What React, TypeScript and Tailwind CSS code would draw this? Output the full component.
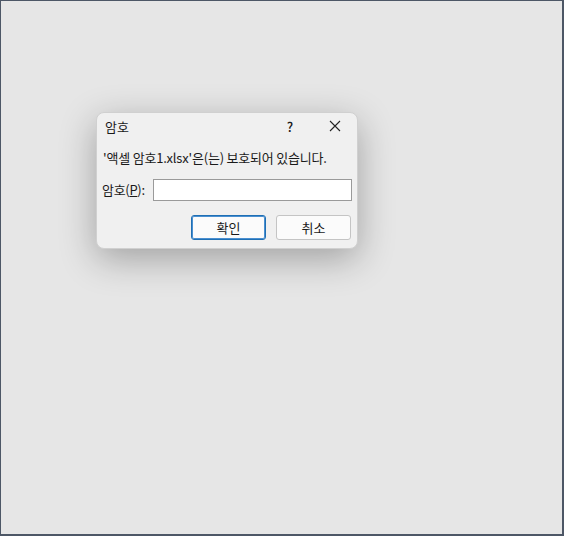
import React from 'react';

export default function App() {
  return (
    <div
      className="w-[564px] h-[536px] bg-[#e6e6e6] border-t border-l border-r-2 border-b-2 border-[#4d5766] pl-[95px] pt-[111px]"
      style={{ fontFamily: '"Noto Sans CJK KR", "Noto Sans", sans-serif' }}
    >
      <div className="w-[262px] h-[137px] bg-[#f0f0f0] rounded-[8px] border border-[#d0d0d0] shadow-[0_10px_36px_rgba(0,0,0,0.3)] flex flex-col text-[13px] text-[#1a1a1a]">
        {/* title bar */}
        <div className="flex items-center h-[26px] pl-[8px]">
          <span className="flex-1 leading-none">암호</span>
          <span className="w-[20px] text-center text-[13px] font-medium leading-none">?</span>
          <span className="w-[45px] ml-[12px] flex justify-center">
            <svg width="12" height="12" viewBox="0 0 12 12" fill="none" stroke="#222" strokeWidth="1.1">
              <path d="M1 1L11 11M11 1L1 11" />
            </svg>
          </span>
        </div>
        <div className="pl-[6px] mt-[4px] h-[27px] leading-[30px] tracking-[-0.2px]">
          '액셀 암호1.xlsx'은(는) 보호되어 있습니다.
        </div>
        <div className="flex items-center mt-[9px] pl-[5px] pr-[5px]">
          <span className="w-[51px] tracking-[-0.3px]">
            암호(<span className="underline">P</span>):
          </span>
          <input className="flex-1 h-[22px] bg-white border border-[#9a9a9a] outline-none" />
        </div>
        <div className="flex justify-end gap-[10px] mt-[14px] pr-[6px]">
          <button className="w-[75px] h-[25px] bg-[#fbfbfb] border border-[#1f6fb4] shadow-[inset_0_0_0_1px_#4a8fd0] rounded-[3px] leading-none">
            확인
          </button>
          <button className="w-[75px] h-[25px] bg-[#fbfbfb] border border-[#c4c4c4] rounded-[3px] leading-none">
            취소
          </button>
        </div>
      </div>
    </div>
  );
}
